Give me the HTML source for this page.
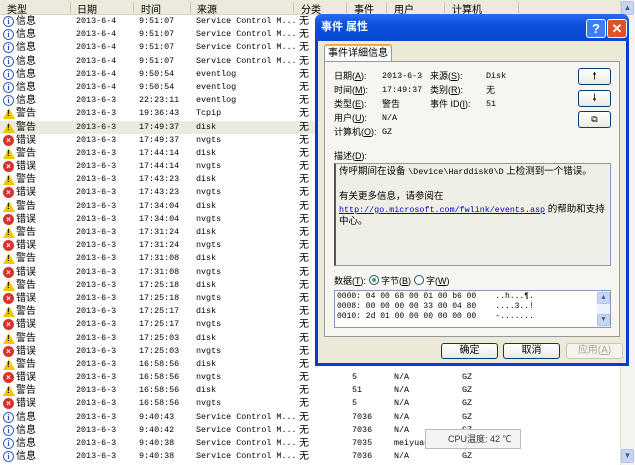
<!DOCTYPE html>
<html><head><meta charset="utf-8"><style>
*{margin:0;padding:0;box-sizing:border-box}
body{width:635px;height:465px;overflow:hidden;background:#fff;font-family:"Liberation Sans","Noto Sans CJK SC",sans-serif;font-size:10px;color:#000;position:relative}
.hdr{position:absolute;left:0;top:0;width:620px;height:15px;background:#ebeadb;border-bottom:1px solid #d6d3c2}
.hdr span{position:absolute;top:1px;font-size:10px;color:#000}
.hdr i{position:absolute;top:2px;width:1px;height:11px;background:#c7c5b2}
.rows{position:absolute;left:0;top:15px;width:620px}
.r{position:relative;height:13.2px;line-height:13px}
.r.sel{background:#ecebe2}
.r span{position:absolute;top:0;white-space:nowrap}
.m{font-family:"Liberation Mono",monospace;font-size:8.4px}
.ic{position:absolute;left:3px;top:1px;width:11px;height:11px;border-radius:50%}
.inf{border:1px solid #3a5fb8;background:#fff;color:#2a4fc0;font:bold 8px/9px "Liberation Serif",serif;text-align:center}
.err{background:#d8322b;color:#fff;font:bold 8px/11px "Liberation Sans",sans-serif;text-align:center}
.warn{width:0;height:0;border-radius:0;border-left:6px solid transparent;border-right:6px solid transparent;border-bottom:11px solid #f0c800}
.warn:after{content:"!";position:absolute;left:-2px;top:1px;font:bold 8px/9px sans-serif;color:#000}
.sb{position:absolute;left:620px;top:0;width:15px;height:465px;background:#f4f3ee;border-left:1px solid #e0ded4}
.sbb{position:absolute;left:621px;width:13px;height:14px;background:#c8d6f5;border:1px solid #b2c3ea;border-radius:2px;color:#4d6185;font-size:8px;text-align:center;line-height:12px}
.dlg{position:absolute;left:315px;top:14px;width:314px;height:352px;background:#0a3bd0;border-radius:7px 7px 0 0;padding:0 3px 3px 3px}
.tb{height:27px;background:linear-gradient(#2a6cf0,#0a50dc 40%,#0848d2);border-radius:7px 7px 0 0;color:#fff;font-weight:bold;font-size:11px;line-height:27px;padding-left:6px;margin:0 -3px}
.body{position:absolute;left:3px;top:27px;right:3px;bottom:3px;background:#ece9d8}
.tbtn{position:absolute;top:5px;width:20px;height:19px;border:1px solid #fff;border-radius:3px;color:#fff;font:bold 13px/17px sans-serif;text-align:center}
.tab{position:absolute;left:6px;top:3px;width:68px;height:18px;background:#fcfcfe;border:1px solid #919b9c;border-bottom:none;border-top:2px solid #f5a83c;border-radius:3px 3px 0 0;font-size:10px;line-height:15px;text-align:center}
.panel{position:absolute;left:6px;top:20px;width:296px;height:276px;background:#f6f5ef;border:1px solid #919b9c}
.lab{position:absolute;font-size:9px;line-height:12px;white-space:nowrap}
.lab.m{font-size:8.4px}
.btn{position:absolute;background:linear-gradient(#fff,#ece9e0);border:1px solid #003c74;border-radius:3px;font-size:10px;text-align:center}
</style></head><body>
<div class="hdr">
<span style="left:7px">类型</span><i style="left:70px"></i>
<span style="left:77px">日期</span><i style="left:133px"></i>
<span style="left:141px">时间</span><i style="left:190px"></i>
<span style="left:197px">来源</span><i style="left:293px"></i>
<span style="left:301px">分类</span><i style="left:346px"></i>
<span style="left:354px">事件</span><i style="left:386px"></i>
<span style="left:394px">用户</span><i style="left:444px"></i>
<span style="left:452px">计算机</span><i style="left:518px"></i>
</div>
<div class="rows">
<div class="r"><b class="ic inf">i</b><span style="left:16px">信息</span><span class="m" style="left:76px">2013-6-4</span><span class="m" style="left:139px">9:51:07</span><span class="m" style="left:196px">Service Control M...</span><span style="left:299px">无</span></div>
<div class="r"><b class="ic inf">i</b><span style="left:16px">信息</span><span class="m" style="left:76px">2013-6-4</span><span class="m" style="left:139px">9:51:07</span><span class="m" style="left:196px">Service Control M...</span><span style="left:299px">无</span></div>
<div class="r"><b class="ic inf">i</b><span style="left:16px">信息</span><span class="m" style="left:76px">2013-6-4</span><span class="m" style="left:139px">9:51:07</span><span class="m" style="left:196px">Service Control M...</span><span style="left:299px">无</span></div>
<div class="r"><b class="ic inf">i</b><span style="left:16px">信息</span><span class="m" style="left:76px">2013-6-4</span><span class="m" style="left:139px">9:51:07</span><span class="m" style="left:196px">Service Control M...</span><span style="left:299px">无</span></div>
<div class="r"><b class="ic inf">i</b><span style="left:16px">信息</span><span class="m" style="left:76px">2013-6-4</span><span class="m" style="left:139px">9:50:54</span><span class="m" style="left:196px">eventlog</span><span style="left:299px">无</span></div>
<div class="r"><b class="ic inf">i</b><span style="left:16px">信息</span><span class="m" style="left:76px">2013-6-4</span><span class="m" style="left:139px">9:50:54</span><span class="m" style="left:196px">eventlog</span><span style="left:299px">无</span></div>
<div class="r"><b class="ic inf">i</b><span style="left:16px">信息</span><span class="m" style="left:76px">2013-6-3</span><span class="m" style="left:139px">22:23:11</span><span class="m" style="left:196px">eventlog</span><span style="left:299px">无</span></div>
<div class="r"><b class="ic warn"></b><span style="left:16px">警告</span><span class="m" style="left:76px">2013-6-3</span><span class="m" style="left:139px">19:36:43</span><span class="m" style="left:196px">Tcpip</span><span style="left:299px">无</span></div>
<div class="r sel"><b class="ic warn"></b><span style="left:16px">警告</span><span class="m" style="left:76px">2013-6-3</span><span class="m" style="left:139px">17:49:37</span><span class="m" style="left:196px">disk</span><span style="left:299px">无</span></div>
<div class="r"><b class="ic err">×</b><span style="left:16px">错误</span><span class="m" style="left:76px">2013-6-3</span><span class="m" style="left:139px">17:49:37</span><span class="m" style="left:196px">nvgts</span><span style="left:299px">无</span></div>
<div class="r"><b class="ic warn"></b><span style="left:16px">警告</span><span class="m" style="left:76px">2013-6-3</span><span class="m" style="left:139px">17:44:14</span><span class="m" style="left:196px">disk</span><span style="left:299px">无</span></div>
<div class="r"><b class="ic err">×</b><span style="left:16px">错误</span><span class="m" style="left:76px">2013-6-3</span><span class="m" style="left:139px">17:44:14</span><span class="m" style="left:196px">nvgts</span><span style="left:299px">无</span></div>
<div class="r"><b class="ic warn"></b><span style="left:16px">警告</span><span class="m" style="left:76px">2013-6-3</span><span class="m" style="left:139px">17:43:23</span><span class="m" style="left:196px">disk</span><span style="left:299px">无</span></div>
<div class="r"><b class="ic err">×</b><span style="left:16px">错误</span><span class="m" style="left:76px">2013-6-3</span><span class="m" style="left:139px">17:43:23</span><span class="m" style="left:196px">nvgts</span><span style="left:299px">无</span></div>
<div class="r"><b class="ic warn"></b><span style="left:16px">警告</span><span class="m" style="left:76px">2013-6-3</span><span class="m" style="left:139px">17:34:04</span><span class="m" style="left:196px">disk</span><span style="left:299px">无</span></div>
<div class="r"><b class="ic err">×</b><span style="left:16px">错误</span><span class="m" style="left:76px">2013-6-3</span><span class="m" style="left:139px">17:34:04</span><span class="m" style="left:196px">nvgts</span><span style="left:299px">无</span></div>
<div class="r"><b class="ic warn"></b><span style="left:16px">警告</span><span class="m" style="left:76px">2013-6-3</span><span class="m" style="left:139px">17:31:24</span><span class="m" style="left:196px">disk</span><span style="left:299px">无</span></div>
<div class="r"><b class="ic err">×</b><span style="left:16px">错误</span><span class="m" style="left:76px">2013-6-3</span><span class="m" style="left:139px">17:31:24</span><span class="m" style="left:196px">nvgts</span><span style="left:299px">无</span></div>
<div class="r"><b class="ic warn"></b><span style="left:16px">警告</span><span class="m" style="left:76px">2013-6-3</span><span class="m" style="left:139px">17:31:08</span><span class="m" style="left:196px">disk</span><span style="left:299px">无</span></div>
<div class="r"><b class="ic err">×</b><span style="left:16px">错误</span><span class="m" style="left:76px">2013-6-3</span><span class="m" style="left:139px">17:31:08</span><span class="m" style="left:196px">nvgts</span><span style="left:299px">无</span></div>
<div class="r"><b class="ic warn"></b><span style="left:16px">警告</span><span class="m" style="left:76px">2013-6-3</span><span class="m" style="left:139px">17:25:18</span><span class="m" style="left:196px">disk</span><span style="left:299px">无</span></div>
<div class="r"><b class="ic err">×</b><span style="left:16px">错误</span><span class="m" style="left:76px">2013-6-3</span><span class="m" style="left:139px">17:25:18</span><span class="m" style="left:196px">nvgts</span><span style="left:299px">无</span></div>
<div class="r"><b class="ic warn"></b><span style="left:16px">警告</span><span class="m" style="left:76px">2013-6-3</span><span class="m" style="left:139px">17:25:17</span><span class="m" style="left:196px">disk</span><span style="left:299px">无</span></div>
<div class="r"><b class="ic err">×</b><span style="left:16px">错误</span><span class="m" style="left:76px">2013-6-3</span><span class="m" style="left:139px">17:25:17</span><span class="m" style="left:196px">nvgts</span><span style="left:299px">无</span></div>
<div class="r"><b class="ic warn"></b><span style="left:16px">警告</span><span class="m" style="left:76px">2013-6-3</span><span class="m" style="left:139px">17:25:03</span><span class="m" style="left:196px">disk</span><span style="left:299px">无</span></div>
<div class="r"><b class="ic err">×</b><span style="left:16px">错误</span><span class="m" style="left:76px">2013-6-3</span><span class="m" style="left:139px">17:25:03</span><span class="m" style="left:196px">nvgts</span><span style="left:299px">无</span></div>
<div class="r"><b class="ic warn"></b><span style="left:16px">警告</span><span class="m" style="left:76px">2013-6-3</span><span class="m" style="left:139px">16:58:56</span><span class="m" style="left:196px">disk</span><span style="left:299px">无</span></div>
<div class="r"><b class="ic err">×</b><span style="left:16px">错误</span><span class="m" style="left:76px">2013-6-3</span><span class="m" style="left:139px">16:58:56</span><span class="m" style="left:196px">nvgts</span><span style="left:299px">无</span><span class="m" style="left:352px">5</span><span class="m" style="left:394px">N/A</span><span class="m" style="left:462px">GZ</span></div>
<div class="r"><b class="ic warn"></b><span style="left:16px">警告</span><span class="m" style="left:76px">2013-6-3</span><span class="m" style="left:139px">16:58:56</span><span class="m" style="left:196px">disk</span><span style="left:299px">无</span><span class="m" style="left:352px">51</span><span class="m" style="left:394px">N/A</span><span class="m" style="left:462px">GZ</span></div>
<div class="r"><b class="ic err">×</b><span style="left:16px">错误</span><span class="m" style="left:76px">2013-6-3</span><span class="m" style="left:139px">16:58:56</span><span class="m" style="left:196px">nvgts</span><span style="left:299px">无</span><span class="m" style="left:352px">5</span><span class="m" style="left:394px">N/A</span><span class="m" style="left:462px">GZ</span></div>
<div class="r"><b class="ic inf">i</b><span style="left:16px">信息</span><span class="m" style="left:76px">2013-6-3</span><span class="m" style="left:139px">9:40:43</span><span class="m" style="left:196px">Service Control M...</span><span style="left:299px">无</span><span class="m" style="left:352px">7036</span><span class="m" style="left:394px">N/A</span><span class="m" style="left:462px">GZ</span></div>
<div class="r"><b class="ic inf">i</b><span style="left:16px">信息</span><span class="m" style="left:76px">2013-6-3</span><span class="m" style="left:139px">9:40:42</span><span class="m" style="left:196px">Service Control M...</span><span style="left:299px">无</span><span class="m" style="left:352px">7036</span><span class="m" style="left:394px">N/A</span><span class="m" style="left:462px">GZ</span></div>
<div class="r"><b class="ic inf">i</b><span style="left:16px">信息</span><span class="m" style="left:76px">2013-6-3</span><span class="m" style="left:139px">9:40:38</span><span class="m" style="left:196px">Service Control M...</span><span style="left:299px">无</span><span class="m" style="left:352px">7035</span><span class="m" style="left:394px">meiyuan</span><span class="m" style="left:462px">GZ</span></div>
<div class="r"><b class="ic inf">i</b><span style="left:16px">信息</span><span class="m" style="left:76px">2013-6-3</span><span class="m" style="left:139px">9:40:38</span><span class="m" style="left:196px">Service Control M...</span><span style="left:299px">无</span><span class="m" style="left:352px">7036</span><span class="m" style="left:394px">N/A</span><span class="m" style="left:462px">GZ</span></div>
</div>
<div class="sb"></div>
<div class="sbb" style="top:1px">▲</div>
<div class="sbb" style="top:449px">▼</div>
<div style="position:absolute;left:425px;top:429px;width:96px;height:20px;background:#f4f4f4;border:1px solid #bbb;font-size:9px;line-height:18px;padding-left:22px;color:#333">CPU温度: 42 ℃</div>

<div class="dlg">
<div class="tb">事件 属性</div>
<div class="tbtn" style="left:271px;background:#3d7df5">?</div>
<div class="tbtn" style="left:292px;background:#e0502a">✕</div>
<div class="body">
<div class="tab">事件详細信息</div>
<div class="panel">
<div class="lab" style="left:9px;top:8px">日期(<u>A</u>):</div><div class="lab m" style="left:57px;top:8px">2013-6-3</div>
<div class="lab" style="left:105px;top:8px">来源(<u>S</u>):</div><div class="lab m" style="left:161px;top:8px">Disk</div>
<div class="lab" style="left:9px;top:22px">时间(<u>M</u>):</div><div class="lab m" style="left:57px;top:22px">17:49:37</div>
<div class="lab" style="left:105px;top:22px">类别(<u>R</u>):</div><div class="lab" style="left:161px;top:22px">无</div>
<div class="lab" style="left:9px;top:36px">类型(<u>E</u>):</div><div class="lab" style="left:57px;top:36px">警告</div>
<div class="lab" style="left:105px;top:36px">事件 ID(<u>I</u>):</div><div class="lab m" style="left:161px;top:36px">51</div>
<div class="lab" style="left:9px;top:50px">用户(<u>U</u>):</div><div class="lab m" style="left:57px;top:50px">N/A</div>
<div class="lab" style="left:9px;top:64px">计算机(<u>O</u>):</div><div class="lab m" style="left:57px;top:64px">GZ</div>
<div class="btn" style="left:253px;top:6px;width:33px;height:17px;line-height:15px">🠕</div>
<div class="btn" style="left:253px;top:28px;width:33px;height:17px;line-height:15px">🠗</div>
<div class="btn" style="left:253px;top:49px;width:33px;height:17px;line-height:15px;font-size:9px">⧉</div>
<div class="lab" style="left:9px;top:88px">描述(<u>D</u>):</div>
<div style="position:absolute;left:9px;top:101px;width:277px;height:103px;background:#f0efe6;border:1px solid #7f9db9;border-left:2px solid #555;padding:2px 3px;font-size:9.5px;line-height:12.5px">传呼期间在设备 <span class="m">\Device\Harddisk0\D</span> 上检测到一个错误。<br><br>有关更多信息，请参阅在<br><span class="m" style="color:#0000c0;text-decoration:underline">http://go.microsoft.com/fwlink/events.asp</span> 的帮助和支持中心。</div>
<div class="lab" style="left:9px;top:213px">数据(<u>T</u>): <span style="display:inline-block;width:10px;height:10px;border:1px solid #1c5180;border-radius:50%;background:radial-gradient(#3a3 30%,#fff 40%);vertical-align:-1px"></span> 字节(<u>B</u>) <span style="display:inline-block;width:10px;height:10px;border:1px solid #1c5180;border-radius:50%;background:#fff;vertical-align:-1px"></span> 字(<u>W</u>)</div>
<div style="position:absolute;left:9px;top:228px;width:277px;height:38px;background:#fff;border:1px solid #7f9db9;padding:1px 2px;font-family:'Liberation Mono',monospace;font-size:8px;line-height:10px;white-space:pre">0000: 04 00 68 00 01 00 b6 00    ..h...¶.
0008: 00 00 00 00 33 00 04 80    ....3..!
0010: 2d 01 00 00 00 00 00 00    -.......</div>
<div style="position:absolute;left:272px;top:229px;width:13px;height:36px;background:#eef2fc"><div class="sbb" style="left:0;top:1px;height:12px;font-size:7px;line-height:10px">▲</div><div class="sbb" style="left:0;top:23px;height:12px;font-size:7px;line-height:10px">▼</div></div>
</div>
<div class="btn" style="left:123px;top:302px;width:57px;height:16px;line-height:14px">确定</div>
<div class="btn" style="left:185px;top:302px;width:57px;height:16px;line-height:14px">取消</div>
<div class="btn" style="left:248px;top:302px;width:57px;height:16px;line-height:14px;color:#aca899;border-color:#c9c7ba;background:#f4f3ee">应用(<u>A</u>)</div>
</div>
</div>
</body></html>
